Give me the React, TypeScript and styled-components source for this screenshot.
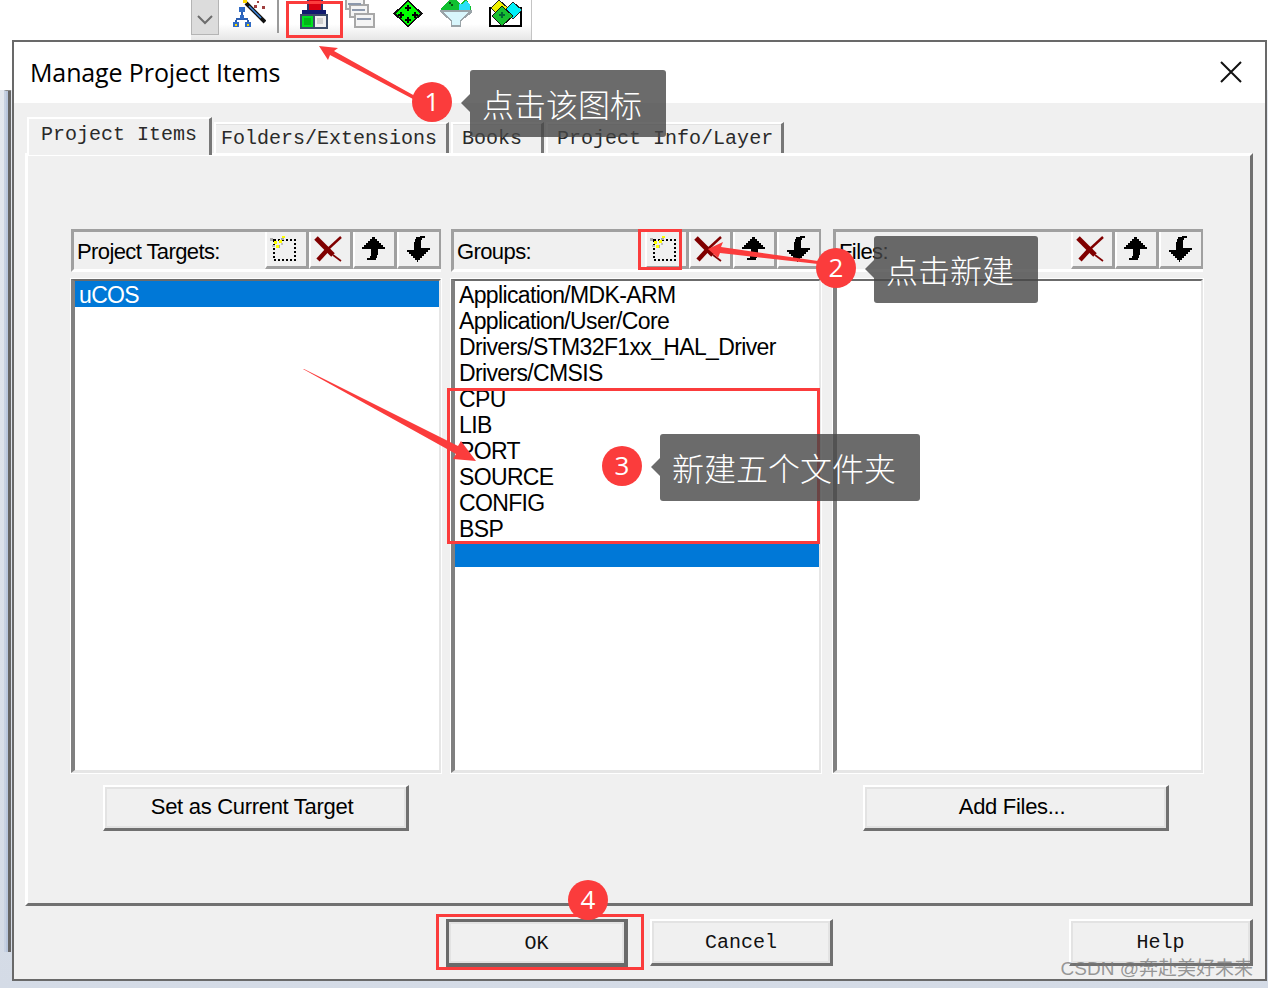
import styled, { createGlobalStyle } from "styled-components";

const GlobalStyle = createGlobalStyle`
  html, body {
    margin: 0;
    padding: 0;
    background: #fff;
  }
`;

const UI_FONT = `"Liberation Sans", Arial, sans-serif`;
const MONO_FONT = `"Liberation Mono", "Courier New", monospace`;
const CJK_FONT = `"Noto Sans CJK SC", "Noto Sans", sans-serif`;
const RED = "#fb3c3c";

const NewIcon = () => (
  <svg width="28" height="26" viewBox="0 0 28 26" shapeRendering="crispEdges">
    <rect x="5" y="4" width="21" height="20" fill="none" stroke="#000" strokeWidth="2" strokeDasharray="2 2" />
    <path d="M1 2h3v3H1zM8 9h3v3H8zM12 2h3v2h-3z" fill="#a8a8a8" />
    <path d="M5 5h3v3H5zM10 4h3v3h-3zM7 9h3v3H7zM13 0h3v2h-3z" fill="#ffff00" />
    <path d="M3 9h3v2H3zM12 7h2v2h-2z" fill="#c0c0c0" />
  </svg>
);

const DeleteIcon = () => (
  <svg width="28" height="26" viewBox="0 0 28 26">
    <path d="M2 2 L19 19" stroke="#800000" strokeWidth="5" />
    <path d="M19 19 L27 25" stroke="#800000" strokeWidth="1.6" />
    <path d="M27 1 L14 13" stroke="#800000" strokeWidth="2.4" />
    <path d="M15 12 L4 24" stroke="#800000" strokeWidth="4.4" />
  </svg>
);

const UpIcon = () => (
  <svg width="24" height="26" viewBox="0 0 24 26" shapeRendering="crispEdges">
    <path d="M12 1h1v2h2v2h2v2h2v2h2v2h2v2H16v6h-1v3h-1v2H5v-2h3v-2h1v-7H0v-2h2V9h2V7h2V5h2V3h2V1z" fill="#000" />
  </svg>
);

const DownIcon = () => (
  <svg width="24" height="26" viewBox="0 0 24 26" shapeRendering="crispEdges">
    <path d="M14 0h5v2h-3v2h-1v8h9v2h-2v2h-2v2h-2v2h-2v2h-2v2h-2v2h-1v-2H9v-2H7v-2H5v-2H3v-2H1v-2h7V6h1V3h1V1h4z" fill="#000" />
  </svg>
);

const WizardIcon = () => (
  <svg width="33" height="27" viewBox="0 0 33 27">
    <g shapeRendering="crispEdges">
      <path d="M8 12h2v6H8zM3 18h12v2H3zM2 20h2v2H2zM14 20h2v2h-2z" fill="#2a5db0" />
      <path d="M6 7h6v5H6zM0 22h6v5H0zM12 22h6v5h-6zM7 15h4v4H7z" fill="#2f6ac4" />
      <path d="M2 24h2v2H2zM14 24h2v2h-2z" fill="#ffd800" />
    </g>
    <path d="M13 3 L32 22" stroke="#111" strokeWidth="4" />
    <path d="M16 6 L28 18" stroke="#3d86e0" strokeWidth="1.5" />
    <path d="M10 0h4v3h-4z" fill="#ffd800" />
    <path d="M21 5h3v3h-3zM29 6h3v3h-3zM24 1h2v2h-2z" fill="#a04040" />
  </svg>
);

const ManageIcon = () => (
  <svg width="28" height="29" viewBox="0 0 28 29" shapeRendering="crispEdges">
    <rect x="9" y="0" width="12" height="11" fill="#d80010" />
    <rect x="7" y="0" width="2" height="11" fill="#2b3a6b" />
    <rect x="21" y="0" width="2" height="11" fill="#2b3a6b" />
    <rect x="2" y="10" width="24" height="4" fill="#101a70" />
    <rect x="0" y="14" width="28" height="15" fill="#3a4a68" />
    <rect x="2" y="16" width="11" height="11" fill="#00e020" />
    <rect x="4" y="18" width="7" height="7" fill="#00b818" />
    <rect x="15" y="16" width="11" height="11" fill="#f0f0f0" />
    <rect x="17" y="18" width="6" height="6" fill="#cfcfcf" />
  </svg>
);

const WindowsIcon = () => (
  <svg width="30" height="28" viewBox="0 0 30 28" shapeRendering="crispEdges">
    <g fill="#f4f4f4" stroke="#a8a8a8" strokeWidth="2">
      <rect x="1" y="-2" width="18" height="11" />
      <rect x="5" y="5" width="18" height="12" />
      <rect x="10" y="14" width="19" height="13" />
    </g>
    <path d="M3 3h13v2H3zM7 9h13v2H7zM12 18h14v2H12z" fill="#8c98ac" />
  </svg>
);

const DiamondIcon = () => (
  <svg width="30" height="27" viewBox="0 0 30 27" shapeRendering="crispEdges">
    <path d="M15 0 L30 13.5 L15 27 L0 13.5 Z" fill="#111" />
    <path d="M15 2 L27 13.5 L15 25 L3 13.5 Z" fill="#00ff00" />
    <path d="M14 5h2v2h2v2h-2v2h-2V9h-2V7h2zM7 12h2v2h2v2H9v2H7v-2H5v-2h2zM21 12h2v2h2v2h-2v2h-2v-2h-2v-2h2zM14 17h2v2h2v2h-2v2h-2v-2h-2v-2h2z" fill="#000" />
  </svg>
);

const FunnelIcon = () => (
  <svg width="32" height="27" viewBox="0 0 32 27" shapeRendering="crispEdges">
    <path d="M9 0h7l4 4 4-4h3l4 7v5H1V9z" fill="#10c030" />
    <path d="M19 4h3l3-3h2l3 4v6H19z" fill="#28e0f8" />
    <path d="M9 2h2v2h2v2h-2V4H9z" fill="#0a4a10" />
    <path d="M0 10h32v2l-3 3-8 6v6h-10v-6l-8-6-3-3z" fill="#9aa4a8" />
    <path d="M3 12h26l-9 8v5h-8v-5z" fill="#d8f6fc" />
  </svg>
);

const ColorsIcon = () => (
  <svg width="33" height="27" viewBox="0 0 33 27" shapeRendering="crispEdges">
    <rect x="1" y="8" width="31" height="18" fill="#fff" stroke="#000" strokeWidth="2" />
    <path d="M10 0 L19 8 L10 16 L2 8 Z" fill="#f0f000" stroke="#222" strokeWidth="1" />
    <path d="M24 2 L33 10 L24 19 L16 10 Z" fill="#00f0f8" stroke="#222" strokeWidth="1" />
    <path d="M13 6 L24 16 L13 26 L3 16 Z" fill="#18c030" stroke="#111" strokeWidth="1" />
    <path d="M12 12h2v2h2v2h-2v2h-2v-2h-2v-2h2z" fill="#063" />
  </svg>
);

const projectTargets = ["uCOS"];
const groups = [
  "Application/MDK-ARM",
  "Application/User/Core",
  "Drivers/STM32F1xx_HAL_Driver",
  "Drivers/CMSIS",
  "CPU",
  "LIB",
  "PORT",
  "SOURCE",
  "CONFIG",
  "BSP",
];

const App = () => {
  return (
    <Stage>
      <GlobalStyle />
      <TopStrip>
        <Toolbar>
          <DropButton>
            <svg width="16" height="10" viewBox="0 0 16 10">
              <path d="M1 1 L8 8 L15 1" fill="none" stroke="#6c6c6c" strokeWidth="2" />
            </svg>
          </DropButton>
          <ToolIcon $left={14}><WizardIcon /></ToolIcon>
          <ToolSep />
          <ToolIcon $left={21}><ManageIcon /></ToolIcon>
          <ToolIcon $left={17}><WindowsIcon /></ToolIcon>
          <ToolIcon $left={18}><DiamondIcon /></ToolIcon>
          <ToolIcon $left={17}><FunnelIcon /></ToolIcon>
          <ToolIcon $left={17}><ColorsIcon /></ToolIcon>
        </Toolbar>
      </TopStrip>

      <DialogRow>
        <Gutter>
          <BackEdge />
        </Gutter>
        <Dialog>
          <TitleBar>
            <Title>Manage Project Items</Title>
            <CloseButton>
              <svg width="22" height="22" viewBox="0 0 22 22">
                <path d="M1 1 L21 21 M21 1 L1 21" stroke="#111" strokeWidth="2" />
              </svg>
            </CloseButton>
          </TitleBar>

          <Client>
            <TabStrip>
              <Tab $active $left={12} $right={12}>Project Items</Tab>
              <Tab $left={5} $right={9}>Folders/Extensions</Tab>
              <Tab $left={9} $right={19}>Books</Tab>
              <Tab $left={9} $right={8}>Project Info/Layer</Tab>
            </TabStrip>

            <TabPanel>
              <Column $gap={10}>
                <PanelHeader>
                  <PanelLabel>Project Targets:</PanelLabel>
                  <ToolGroup>
                    <IconButton $nudge={8}><NewIcon /></IconButton>
                    <IconButton $nudge={6}><DeleteIcon /></IconButton>
                    <IconButton $nudge={2}><UpIcon /></IconButton>
                    <IconButton $nudge={3}><DownIcon /></IconButton>
                  </ToolGroup>
                </PanelHeader>
                <List>
                  {projectTargets.map((t) => (
                    <ListItem key={t} $selected>{t}</ListItem>
                  ))}
                </List>
                <WideButton $left={32}>Set as Current Target</WideButton>
              </Column>

              <Column $gap={12}>
                <PanelHeader>
                  <PanelLabel>Groups:</PanelLabel>
                  <ToolGroup>
                    <IconButton $nudge={8}><NewIcon /></IconButton>
                    <IconButton $nudge={6}><DeleteIcon /></IconButton>
                    <IconButton $nudge={2}><UpIcon /></IconButton>
                    <IconButton $nudge={3}><DownIcon /></IconButton>
                  </ToolGroup>
                </PanelHeader>
                <List>
                  {groups.map((g) => (
                    <ListItem key={g}>{g}</ListItem>
                  ))}
                  <BlankRow />
                </List>
              </Column>

              <Column $gap={0}>
                <PanelHeader>
                  <PanelLabel>Files:</PanelLabel>
                  <ToolGroup>
                    <IconButton $nudge={6}><DeleteIcon /></IconButton>
                    <IconButton $nudge={2}><UpIcon /></IconButton>
                    <IconButton $nudge={3}><DownIcon /></IconButton>
                  </ToolGroup>
                </PanelHeader>
                <List />
                <WideButton $left={30}>Add Files...</WideButton>
              </Column>
            </TabPanel>

            <Footer>
              <DialogButton $default $left={432}>OK</DialogButton>
              <DialogButton $left={22}>Cancel</DialogButton>
              <HelpButton>Help</HelpButton>
            </Footer>
          </Client>
        </Dialog>
      </DialogRow>

      <ArrowLayer width="1268" height="988" viewBox="0 0 1268 988">
        <polygon points="319,46 338,48 334,51 415,96 413,99 330,55 328,60" fill={RED} />
        <polygon points="708,249 723,242 721,247 818,261 818,264 720,253 718,258" fill={RED} />
        <polygon points="303,369 304,369 458,446 461,441 476,461 453,459 456,454" fill={RED} />
      </ArrowLayer>

      <Marker $x={286} $y={1} $w={57} $h={37} />
      <Marker $x={638} $y={229} $w={44} $h={41} />
      <Marker $x={447} $y={388} $w={373} $h={156} />
      <Marker $x={436} $y={914} $w={208} $h={56} />

      <Badge $x={412} $y={82}>1</Badge>
      <Badge $x={816} $y={248}>2</Badge>
      <Badge $x={602} $y={446}>3</Badge>
      <Badge $x={568} $y={880}>4</Badge>

      <Callout $x={470} $y={70} $w={196}>点击该图标</Callout>
      <Callout $x={874} $y={236} $w={164}>点击新建</Callout>
      <Callout $x={660} $y={434} $w={260}>新建五个文件夹</Callout>

      <Watermark>CSDN @奔赴美好未来</Watermark>
    </Stage>
  );
};

export default App;

const Stage = styled.div`
  position: relative;
  width: 1268px;
  height: 988px;
  overflow: hidden;
  background: linear-gradient(180deg, #fff 0, #fff 90px, #e4e8ee 90px, #d4dbe6 100%);
  font-family: ${UI_FONT};
`;

const TopStrip = styled.div`
  height: 40px;
  background: #fff;
  padding-left: 191px;
`;

const Toolbar = styled.div`
  width: 341px;
  height: 40px;
  box-sizing: border-box;
  display: flex;
  align-items: flex-start;
  border-right: 1px solid #c4c4c4;
  background: linear-gradient(180deg, #fff 0, #fff 60%, #e6e6e6 100%);
`;

const DropButton = styled.div`
  width: 28px;
  height: 35px;
  box-sizing: border-box;
  display: flex;
  align-items: center;
  justify-content: center;
  padding-top: 6px;
  background: #dcdcdc;
  border: 1px solid #b4b4b4;
  border-top: none;
`;

const ToolIcon = styled.div<{ $left: number }>`
  margin-left: ${(p) => p.$left}px;
  display: flex;
`;

const ToolSep = styled.div`
  width: 2px;
  height: 33px;
  margin-left: 11px;
  background: #9a9a9a;
`;

const DialogRow = styled.div`
  display: flex;
  align-items: flex-start;
`;

const Gutter = styled.div`
  width: 12px;
  flex: none;
`;

const BackEdge = styled.div`
  width: 7px;
  height: 862px;
  margin: 50px 0 0 4px;
  background: #b9c6dc;
  border-left: 2px solid #c8d2e2;
  border-top: 1px solid #8a8a8a;
  box-shadow: inset -3px 0 0 #666;
  box-sizing: border-box;
`;

const Dialog = styled.div`
  width: 1255px;
  height: 941px;
  box-sizing: border-box;
  display: flex;
  flex-direction: column;
  background: #f0f0f0;
  border: 2px solid #696969;
`;

const TitleBar = styled.div`
  height: 61px;
  flex: none;
  box-sizing: border-box;
  display: flex;
  align-items: center;
  justify-content: space-between;
  padding: 0 23px 2px 16px;
  background: #fff;
`;

const Title = styled.div`
  font-family: "Open Sans", "Noto Sans", sans-serif;
  font-size: 25px;
  letter-spacing: -0.12px;
  color: #000;
`;

const CloseButton = styled.div`
  display: flex;
`;

const Client = styled.div`
  flex: 1;
  display: flex;
  flex-direction: column;
  min-height: 0;
`;

const TabStrip = styled.div`
  height: 52px;
  flex: none;
  box-sizing: border-box;
  display: flex;
  align-items: flex-start;
  padding: 14px 0 0 13px;
  margin-bottom: -2px;
  position: relative;
  z-index: 1;
`;

const Tab = styled.div<{ $active?: boolean; $left: number; $right: number }>`
  box-sizing: border-box;
  height: ${(p) => (p.$active ? "38px" : "31px")};
  margin-top: ${(p) => (p.$active ? "0" : "5px")};
  margin-right: 2px;
  padding: ${(p) => (p.$active ? "3px" : "2px")} ${(p) => p.$right}px 0 ${(p) => p.$left}px;
  font-family: ${MONO_FONT};
  font-size: 20px;
  line-height: 26px;
  white-space: pre;
  color: #2a2a2a;
  background: #f0f0f0;
  border-top: 2px solid #fff;
  border-left: 2px solid #fff;
  border-right: 3px solid #777;
  box-shadow: ${(p) => (p.$active ? "none" : "inset 0 1px 0 #e2e2e2")};
`;

const TabPanel = styled.div`
  width: 1228px;
  height: 753px;
  flex: none;
  margin-left: 11px;
  box-sizing: border-box;
  display: flex;
  align-items: flex-start;
  padding: 73px 0 0 43px;
  border-top: 3px solid #fff;
  border-left: 3px solid #fff;
  border-right: 3px solid #707070;
  border-bottom: 3px solid #707070;
`;

const Column = styled.div<{ $gap: number }>`
  width: 370px;
  flex: none;
  margin-right: ${(p) => p.$gap}px;
  display: flex;
  flex-direction: column;
  align-items: flex-start;
`;

const PanelHeader = styled.div`
  width: 100%;
  height: 43px;
  box-sizing: border-box;
  display: flex;
  align-items: center;
  justify-content: space-between;
  padding: 3px 0 0 3px;
  border-top: 3px solid #a0a0a0;
  border-left: 3px solid #a0a0a0;
  border-bottom: 3px solid #fff;
`;

const PanelLabel = styled.div`
  font-size: 22px;
  letter-spacing: -0.6px;
  color: #000;
`;

const ToolGroup = styled.div`
  display: flex;
  align-self: flex-start;
  margin-top: -3px;
`;

const IconButton = styled.div<{ $nudge?: number }>`
  width: 44px;
  height: 37px;
  box-sizing: border-box;
  display: flex;
  align-items: center;
  justify-content: center;
  padding-right: ${(p) => p.$nudge ?? 0}px;
  border-left: 2px solid #fff;
  border-right: 3px solid #a0a0a0;
  border-bottom: 3px solid #a0a0a0;
  background: #f0f0f0;

  &:last-child {
    border-right-width: 2px;
  }
`;

const List = styled.div`
  width: 100%;
  height: 494px;
  margin-top: 7px;
  box-sizing: border-box;
  background: #fff;
  border-top: 2px solid #6b6b6b;
  border-left: 4px solid #808080;
  border-right: 2px solid #e6e6e6;
  border-bottom: 3px solid #e6e6e6;
  outline: 1px solid #fff;
`;

const ListItem = styled.div<{ $selected?: boolean }>`
  height: 26px;
  padding-left: 4px;
  font-size: 23px;
  line-height: 28px;
  letter-spacing: -0.65px;
  white-space: nowrap;
  color: ${(p) => (p.$selected ? "#fff" : "#000")};
  background: ${(p) => (p.$selected ? "#0078d7" : "transparent")};
`;

const BlankRow = styled.div`
  height: 24px;
  margin-top: 2px;
  background: #0078d7;
`;

const raised = `
  box-sizing: border-box;
  display: flex;
  align-items: center;
  justify-content: center;
  background: #f0f0f0;
  border-top: 2px solid #fff;
  border-left: 2px solid #fff;
  border-right: 3px solid #707070;
  border-bottom: 3px solid #707070;
  box-shadow: inset 2px 2px 0 #e3e3e3, inset -2px -2px 0 #e3e3e3;
`;

const WideButton = styled.div<{ $left: number }>`
  ${raised}
  width: 306px;
  height: 46px;
  margin: 12px 0 0 ${(p) => p.$left}px;
  padding: 0 7px 2px 0;
  font-size: 22px;
  letter-spacing: -0.3px;
  color: #000;
`;

const Footer = styled.div`
  flex: 1;
  display: flex;
  align-items: flex-start;
  padding: 13px 12px 0 0;
`;

const DialogButton = styled.div<{ $default?: boolean; $left: number }>`
  ${raised}
  width: ${(p) => (p.$default ? "182px" : "183px")};
  height: ${(p) => (p.$default ? "48px" : "47px")};
  margin-left: ${(p) => p.$left}px;
  padding-top: 1px;
  font-family: ${MONO_FONT};
  font-size: 20px;
  color: #111;
  ${(p) => (p.$default ? "border: 3px solid #6a6a6a; border-bottom-width: 4px; border-right-width: 4px;" : "")}
`;

const HelpButton = styled.div`
  ${raised}
  width: 184px;
  height: 47px;
  margin-left: auto;
  padding-top: 1px;
  font-family: ${MONO_FONT};
  font-size: 20px;
  color: #111;
`;

const ArrowLayer = styled.svg`
  position: absolute;
  top: 0;
  left: 0;
  z-index: 2;
  pointer-events: none;
`;

const Marker = styled.div<{ $x: number; $y: number; $w: number; $h: number }>`
  position: absolute;
  z-index: 2;
  left: ${(p) => p.$x}px;
  top: ${(p) => p.$y}px;
  width: ${(p) => p.$w}px;
  height: ${(p) => p.$h}px;
  box-sizing: border-box;
  border: 3px solid ${RED};
`;

const Badge = styled.div<{ $x: number; $y: number }>`
  position: absolute;
  z-index: 3;
  left: ${(p) => p.$x}px;
  top: ${(p) => p.$y}px;
  width: 40px;
  height: 40px;
  border-radius: 50%;
  display: flex;
  align-items: center;
  justify-content: center;
  background: ${RED};
  color: #fff;
  font-family: "Open Sans", "Noto Sans", sans-serif;
  font-size: 26px;
  line-height: 36px;
  padding-bottom: 2px;
  box-sizing: border-box;
`;

const Callout = styled.div<{ $x: number; $y: number; $w: number }>`
  position: absolute;
  z-index: 3;
  left: ${(p) => p.$x}px;
  top: ${(p) => p.$y}px;
  width: ${(p) => p.$w}px;
  height: 67px;
  box-sizing: border-box;
  display: flex;
  align-items: center;
  padding: 0 0 1px 12px;
  border-radius: 3px;
  background: rgba(70, 70, 70, 0.8);
  color: #fff;
  font-family: ${CJK_FONT};
  font-size: 32px;
  font-weight: 300;
  line-height: 40px;
  white-space: nowrap;

  &::before {
    content: "";
    position: absolute;
    left: -9px;
    top: 24px;
    border-top: 9px solid transparent;
    border-bottom: 9px solid transparent;
    border-right: 9px solid rgba(70, 70, 70, 0.8);
  }
`;

const Watermark = styled.div`
  position: absolute;
  z-index: 3;
  right: 15px;
  top: 956px;
  font-family: ${UI_FONT}, ${CJK_FONT};
  font-size: 19px;
  line-height: 26px;
  white-space: nowrap;
  color: rgba(120, 120, 120, 0.75);
`;
